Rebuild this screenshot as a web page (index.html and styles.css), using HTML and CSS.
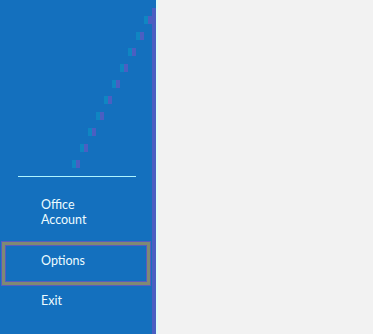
FILE: index.html
```html
<!DOCTYPE html>
<html>
<head>
<meta charset="utf-8">
<link rel="stylesheet" href="styles.css">
</head>
<body>
<div class="app">
  <nav class="sidebar">
    <div class="art">
      <svg width="156" height="176" viewBox="0 0 156 176">
        <g class="dashes">
          <rect x="144" y="16" width="4" height="8" fill="#0f86c2"/><rect x="148" y="16" width="4" height="8" fill="#4b5fc2"/>
          <rect x="136" y="32" width="4" height="8" fill="#0f86c2"/><rect x="140" y="32" width="4" height="8" fill="#4b5fc2"/>
          <rect x="128" y="48" width="4" height="8" fill="#0f86c2"/><rect x="132" y="48" width="4" height="8" fill="#4b5fc2"/>
          <rect x="120" y="64" width="4" height="8" fill="#0f86c2"/><rect x="124" y="64" width="4" height="8" fill="#4b5fc2"/>
          <rect x="112" y="80" width="4" height="8" fill="#0f86c2"/><rect x="116" y="80" width="4" height="8" fill="#4b5fc2"/>
          <rect x="104" y="96" width="4" height="8" fill="#0f86c2"/><rect x="108" y="96" width="4" height="8" fill="#4b5fc2"/>
          <rect x="96" y="112" width="4" height="8" fill="#0f86c2"/><rect x="100" y="112" width="4" height="8" fill="#4b5fc2"/>
          <rect x="88" y="128" width="4" height="8" fill="#0f86c2"/><rect x="92" y="128" width="4" height="8" fill="#4b5fc2"/>
          <rect x="80" y="144" width="4" height="8" fill="#0f86c2"/><rect x="84" y="144" width="4" height="8" fill="#4b5fc2"/>
          <rect x="72" y="160" width="4" height="8" fill="#0f86c2"/><rect x="76" y="160" width="4" height="8" fill="#4b5fc2"/>
        </g>
      </svg>
    </div>
    <div class="divider"></div>
    <ul class="menu">
      <li class="item account">Office<br>Account</li>
      <li class="item options">Options</li>
      <li class="item exit">Exit</li>
    </ul>
  </nav>
  <main class="content"></main>
</div>
</body>
</html>
```
FILE: styles.css
```css
html, body {
  margin: 0;
  padding: 0;
  background: #f2f2f2;
}
.app {
  display: flex;
  width: 373px;
  height: 334px;
  overflow: hidden;
}
.sidebar {
  width: 156px;
  flex: none;
  height: 334px;
  background:
    linear-gradient(#1470be, #1470be) left top / 100% 8px no-repeat,
    linear-gradient(to right, #1470be 152px, #4b5fc2 152px);
  border-right: 2px solid #dffcf7;
  font-family: Lato, "Noto Sans", sans-serif;
  font-size: 12.5px;
  color: #eefcff;
  display: flex;
  flex-direction: column;
}
.art {
  height: 176px;
}
.art svg {
  display: block;
}
.divider {
  height: 1px;
  margin: 0 20px 0 18px;
  background: #aef4ff;
}
.menu {
  list-style: none;
  margin: 0;
  padding: 0;
}
.item {
  line-height: 15px;
  padding-left: 41px;
}
.account {
  margin-top: 20px;
}
.options {
  box-sizing: border-box;
  margin: 15px 0 0 2px;
  width: 148px;
  height: 43px;
  padding: 8px 0 0 36px;
  border: 3px solid #7f8a74;
  outline: 1px solid #5a5cc0;
  box-shadow: inset 0 0 0 1px #5a5cc0;
}
.exit {
  margin-top: 8px;
}
.content {
  flex: 1;
  background: #f2f2f2;
}
```
